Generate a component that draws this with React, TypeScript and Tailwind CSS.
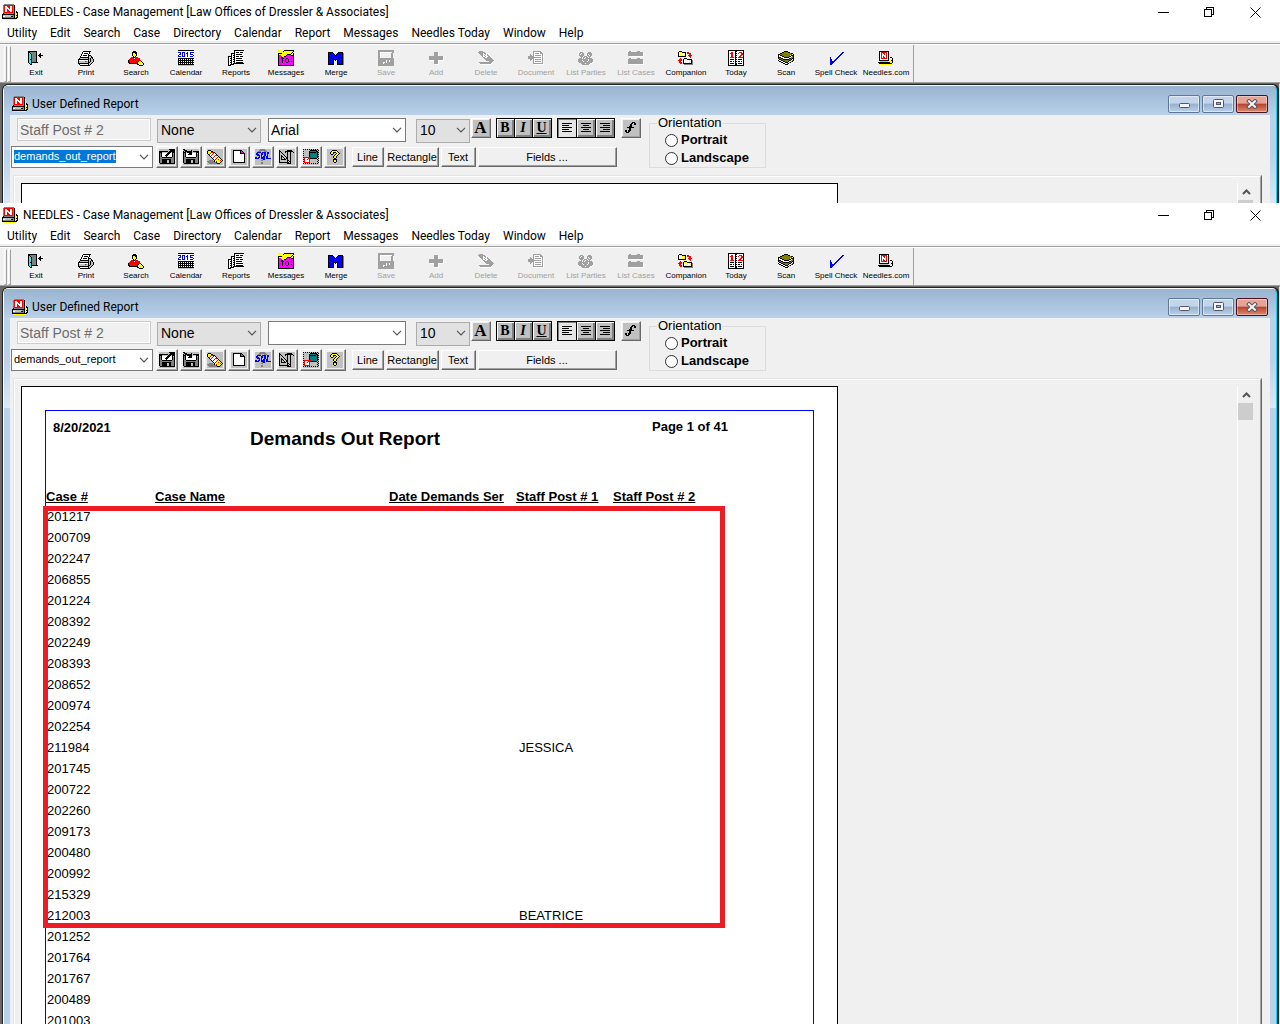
import { useEffect, useId, useRef } from 'react';
import type { ReactNode } from 'react';

const INK: Record<string, string> = {
  k: '#000000',
  w: '#ffffff',
  g: '#808080',
  a: '#a0a0a0',
  s: '#c0c0c0',
  y: '#ffff00',
  r: '#ff0000',
  b: '#0000ff',
  c: '#00ffff',
  m: '#ff00ff',
  o: '#808000',
  t: '#008080',
};

/* Sixteen-colour bitmap icon: every letter is one dot of the INK palette. */
function Bitmap({ rows }: { rows: string[] }) {
  const width = Math.max(...rows.map((r) => r.length));
  const dots: ReactNode[] = [];
  rows.forEach((row, y) => {
    let x = 0;
    while (x < row.length) {
      let end = x + 1;
      while (end < row.length && row[end] === row[x]) end++;
      if (INK[row[x]]) {
        dots.push(<rect key={y * 100 + x} x={x} y={y} width={end - x} height={1} fill={INK[row[x]]} />);
      }
      x = end;
    }
  });
  return (
    <svg width={width} height={rows.length} viewBox={`0 0 ${width} ${rows.length}`} shapeRendering="crispEdges" aria-hidden="true" className="shrink-0">
      {dots}
    </svg>
  );
}

const APP = [
  '..gggggggggg....',
  '.grrrrrrrrrgk...',
  '.grwwrrrwwrgk...',
  '.grwwwrrwwrgky..',
  '.grwwwwrwwrgky..',
  '.grwwrwwwwrgky..',
  '.grwwrrwwwrgky..',
  '.grwwrrrwwrgkyk.',
  '.grrrrrrrrrgkykk',
  '.kggggggggggkyyk',
  'kkkkkkkkkkkkkyyk',
  'ksssssssssggkykk',
  'kwwsssssskkgkyyk',
  'kgggggggggggkykk',
  'kkkkkkkkkkkkkkk.',
  '.yyyyyyyyyyyyy..',
];
const SITE = [
  '.kkkkkkkkkk.....',
  '.kwrrrrrrwk.....',
  '.kwrwrrwrwky....',
  '.kwrwwrwrwky....',
  '.kwrwwwwrwky....',
  '.kwrwrwwrwky....',
  '.kwrwrrwrwkykk..',
  '.kwrrrrrrwky..k.',
  '.kwwwwwwwwky..k.',
  '.kkkkkkkkkkyykk.',
  '..ssssssss.y..k.',
  'kkkkkkkkkkkky.k.',
  '.kkkkkkkkkkkkk..',
  '..yyyyyyyyyyyy..',
];

const EXIT = [
  'kkkkkkkkk.......',
  'kkggggggk.......',
  'kckgggggk...k...',
  'kcckggggk..kk...',
  'kcckggggk.kkkkk.',
  'kcckggggk..kk...',
  'kcckggggk...k...',
  'kcckggggk.......',
  'kckkggggk.......',
  'kcckggggk.......',
  'kcckggggk.......',
  'kcckkkkkkk......',
  '.kck............',
  '..kk............',
];
const PRINT = [
  '.....kkkkkkkk...',
  '....kwwwwwwk....',
  '....kwkkkkwk....',
  '...kwwwwwwk.....',
  '...kwkkkkwkkk...',
  '..kwwwwwwwkssk..',
  '..kkkkkkkkksskk.',
  '.kssssssssksksk.',
  'kkkkkkkkkkkskssk',
  'kwwwwwwwwwkskssk',
  'kssssssrgskskssk',
  'kssssssssskkssk.',
  'kkkkkkkkkkkssk..',
  '.kwwwwwwwwksk...',
  '..kkkkkkkkkk....',
];
const SEARCH = [
  '.....kkk........',
  '....kkkkk.......',
  '....kyykk.......',
  '....kyyyk.......',
  '....kyyyk.......',
  '.....kyk........',
  '...rrkkrrr......',
  '..rrrrwrrrrr....',
  '.rrrrrrrrrrr....',
  'krrrrrrrrrrrr...',
  'krrrrrrrrrkyyk..',
  'kkrrrrrrrkyyywk.',
  '.kkkkkkkkkwyyyyk',
  '.........kkwywwk',
  '...........kkkk.',
];
const CALENDAR = [
  'kkkkkkkkkkkkkkkk',
  'wwwwwwwwwwwwwwww',
  'bbbwbbbwwbwwbbbb',
  'wwbwbwbwbbwwbwww',
  'wbbwbwbwwbwwbbbw',
  'bwwwbwbwwbwwwwwb',
  'bbbwbbbwwbwwbbbw',
  'wwwwwwwwwwwwwwww',
  'kkkkkkkkkkkkkkkk',
  'kwkwkwkwkwkwkwkw',
  'kkkkkkkkkkkkkkkk',
  'kwkwkwkwkwkwkwkw',
  'kkkkkkkkkkkkkkkk',
  'kwkwkwkwkwkwkwkw',
  'kkkkkkkkkkkkkkkk',
  'ssssssssssssssss',
];
const REPORTS = [
  '......kkkkkkkkkk',
  '......kwwwwwwww.',
  '......kwkkkwkkk.',
  '...kkkkwwwwwww..',
  '...kwwkwkkkkkk..',
  '...kwkkwwwwwwww.',
  'kkkkwwkwkkkwkkk.',
  'kwwkwkkwwwwwwww.',
  'kwkkwwkwkkkkkk..',
  'kwwkwkkwwwwwwww.',
  'kwkkwwkwkkkkkkk.',
  'kwwkwkkwwwwwwww.',
  'kwkkwwkwkkkkkkk.',
  'kwwkwkkkkkkkkkkk',
  'kwkkkk..........',
  'kkk.............',
];
const MESSAGES = [
  'yyy...kkkkkkkkkk',
  'yyyyykyyyyyyyyyk',
  '..yyyyyyyyyyyyk.',
  'kkkkyyyyyyyyykyk',
  'kyyyyyyyykkkkyyk',
  'kmmyyyyykmmmmkkk',
  'kmmmyykkmmmmmmmk',
  'kmmkkmmmmmmmmmmk',
  'kmmkkkmmkkmmmkmk',
  'kmmmkmmkmmkmmmmk',
  'kmmmkmmkmmkmmmmk',
  'kmmmkmmkmmkmmkmk',
  'kmmmkmmmkkmmmmmk',
  'kmmmmmmmmmmmmmmk',
  'kmmmmmmmmmmmmmmk',
  'kkkkkkkkkkkkkkkk',
];
const MERGE = [
  '................',
  'kkkkk.....kkkkk.',
  'kbbbbk...kbbbbkg',
  'kbbbbbk.kbbbbbkg',
  'kbbbbbbkbbbbbbkg',
  'kbbbbbbbbbbbbbkg',
  'kbbbbbbbbbbbbbkg',
  'kbbbbkbbbkbbbbkg',
  'kbbbbkkbkkbbbbkg',
  'kbbbbk.k.kbbbbkg',
  'kbbbbk...kbbbbkg',
  'kbbbbk...kbbbbkg',
  'kbbbbk...kbbbbkg',
  'kkkkkk...kkkkkkg',
];
const SAVE = [
  'aaaaaaaaaaaaaaaa',
  'aaaaaaaaaaaaaaaa',
  'aawwwwwwwwwwwwaa',
  'aaw..........aaw',
  'aaw..........aaw',
  'aaw..........aaw',
  'aaw..........aaw',
  'aaw..........aaw',
  'aaaaaaaaaaaaaaaa',
  'aaaaaaaaaaaaaaaa',
  'aaaaaaaawaawaaaa',
  'aaaaaaaawaawaaaa',
  'aaaaawwawaaaaaaa',
  'aaaaawaaaaaaaaaa',
  'aaaaaaaaaaaaaaaa',
  'aaaaaaaaaaaaaaaa',
];
const ADD = [
  '................',
  '......aaaa......',
  '......aaaaw.....',
  '......aaaaw.....',
  '......aaaaw.....',
  '.aaaaaaaaaaaaaa.',
  '.aaaaaaaaaaaaaaw',
  '.aaaaaaaaaaaaaaw',
  '.aaaaaaaaaaaaaaw',
  '..wwwwaaaawwwwww',
  '......aaaaw.....',
  '......aaaaw.....',
  '......aaaaw.....',
  '.......wwww.....',
];
const DELETE = [
  '.aaaa...........',
  'aaaaaaa.........',
  '.aaaawaaw.......',
  '..aaawwawaw.....',
  '...aawawwaaw....',
  '....awwawwaaw...',
  '.....aawwaaaaw..',
  '......aaaaaaaa..',
  '.......aaaaaaaa.',
  '........aaaaaaaa',
  '...........aaaaw',
  '.aaaaaaaaaaaaaw.',
  '..aaaaaaaaaaaww.',
  '...wwwwwwwwww...',
];
const DOCUMENT = [
  '.....aaaaaaaa...',
  '.....awwwwwwaa..',
  '.....awaaaawaaa.',
  '..a..awwwwwwwwaw',
  '..aa.awaaaaaawaw',
  'aaaaaawwwwwwwwaw',
  'aaaaaaaaaaaaawaw',
  'aaaaaawwwwwwwwaw',
  '..aa.awaaaaaawaw',
  '..a..awwwwwwwwaw',
  '.....awaaaaaawaw',
  '.....awwwwwwwwaw',
  '.....aaaaaaaaaaw',
  '......wwwwwwwwww',
];
const PARTIES = [
  '..aaa.....aaa...',
  '.aawaa...aaaaa..',
  '.awaaa...awaaa..',
  '.aaaaa...aawaa..',
  '..aaa.aaa.aaaw..',
  '...a.aawaa.aw...',
  '.aaa.awaaaaaaa..',
  'aaaaaaaaaawaaaa.',
  'aaaawaaaaawaaaa.',
  'aaaaawaaawaaaaaw',
  '.aaaaaaaaaaaaaww',
  '...aaaawaaaaww..',
  '....aaaaaaaw....',
];
const CASES = [
  '.aa......aaa....',
  'aaaaaaaaaaaaaaa.',
  'aaaaaaaaaaaaaaaw',
  'aaaaaaaaaaaaaaaw',
  'aaaaaaaaaaaaaaaw',
  '.wwwwwwwwwwwwwww',
  '................',
  '.aa......aaa....',
  'aaaaaaaaaaaaaaa.',
  'aaaaaaaaaaaaaaaw',
  'aaaaaaaaaaaaaaaw',
  'aaaaaaaaaaaaaaaw',
  'aaaaaaaaaaaaaaaw',
  '.wwwwwwwwwwwwwww',
];
const COMPANION = [
  '.kkk............',
  'kyyykkkk.rr.....',
  'kwwwywyk.rrrr...',
  'kwywwwyk...rr...',
  'kwwwywyk..rrrr..',
  'kkkkkkkk...rr...',
  '............r...',
  '..r...kkk.......',
  '.rrr.kyyykkkkk..',
  'rrrr.kwywwwywkg.',
  '.rr..kwwwywwykg.',
  '.rrr.kwywwwywkg.',
  '..rr.kkkkkkkkkg.',
  '......ggggggggg.',
];
const TODAY = [
  'kkkkkkkkkkkkkkkk',
  'kwwwwwwkkwwwwwwk',
  'kwwrrwwkwwwrrrwk',
  'kwrrrwwkkwrwwrrk',
  'kwwrrwwkwwwwwrrk',
  'kwwrrwwkkwwwrrwk',
  'kwwrrwwkwwwrrwwk',
  'kwrrrrwkkwrrrrrk',
  'kwwwwwwkwwwwwwwk',
  'kwkkkkwkkwkkkkwk',
  'kwwwwwwkwwwwwwwk',
  'kwkkwkwkkwkkwkwk',
  'kwwwwwwkwwwwwwwk',
  'kwkkkkwkkwkkkkwk',
  'kwwwwwwkkwwwwwwk',
  'kkkkkkkkkkkkkkkk',
];
const SCAN = [
  '......kkkk......',
  '....kkooookk....',
  '..kkoooooooookk.',
  'kkooooooooooooyk',
  'kwkkooooooooykkk',
  'kwwwkkoooookkwok',
  'kkkwwwkkkkkwwook',
  'kookkwwwwwwkkokk',
  '.kkookkkkkkookwk',
  'kwwkkooooookkwok',
  '.kkwwkkoookwwok.',
  '...kkwwkkkwok...',
  '.....kkwwok.....',
  '.......kkk......',
];
const CHECK = [
  '................',
  '..............bb',
  '.............bb.',
  '............bb..',
  '...........bb...',
  '..........bb....',
  '..b......bb.....',
  '..b.....bb......',
  '..bb...bb.......',
  '..bb..bb........',
  '..bbbbb.........',
  '..bbbb..........',
  '..bbb...........',
  '..bb............',
];
const OPEN_DISK = [
  '..........kkkkkk',
  '...........kkkkk',
  'kkkkkkkkk.kkkkkk',
  'kkksssss.kkk.kkk',
  'kgkwwwwwkkkwwk.k',
  'kgkwwwwkkkwwwkgk',
  'kgkwwwkkkwwwwkgk',
  'kgkwwwwkwwwwwkgk',
  'kggkkkkkkkkkkggk',
  'kggggggggggggggk',
  'kggkkkkkkkkkgggk',
  'kggkkkkksskkgggk',
  'kggkkkkksskkgggk',
  'kggkkkkksskkgggk',
  '.kkkkkkkkkkkkkkk',
];
const SAVE_DISK = [
  'kk..............',
  '.kkk....k.......',
  'k.kkkkkkk.kkkkkk',
  'kkkskkkkk.ssskkk',
  'kgkwwwkkkwwwwk.k',
  'kgkwwkkkkwwwwkgk',
  'kgkwwwwwwwwwwkgk',
  'kgkwwwwwwwwwwkgk',
  'kggkkkkkkkkkkggk',
  'kggggggggggggggk',
  'kggkkkkkkkkkgggk',
  'kggkkkkksskkgggk',
  'kggkkkkksskkgggk',
  'kggkkkkksskkgggk',
  '.kkkkkkkkkkkkkkk',
];
const ERASER = [
  '.kkk............',
  'kyyykk..........',
  'kyyyrrkk........',
  'kyyrwwrwk.......',
  '.krwwrwwwk......',
  '..kwrwwwrrk.....',
  '...kwwwrwwwk....',
  '....kwrwwwryk...',
  '.....kwwwryyyk..',
  '......kwryyryyk.',
  '..gggg.kyyyyyryk',
  'gggggggkyryyyyk.',
  '.ggggggggkyyyk..',
  '..ggggggggkkk...',
];
const NEW_PAGE = [
  'kkkkkkkkk...',
  'kwwwwwwkmk..',
  'kwwwwwwkmmk.',
  'kwwwwwwkkkkk',
  'kwwwwwwwwwwk',
  'kwwwwwwwwwwk',
  'kwwwwwwwwwwk',
  'kwwwwwwwwwwk',
  'kwwwwwwwwwwk',
  'kwwwwwwwwwwk',
  'kwwwwwwwwwwk',
  'kwwwwwwwwwwk',
  'kkkkkkkkkkkk',
];
const SQL = [
  '.....ggggg......',
  '....ggggggg.....',
  '...ggg...ggg....',
  '..bbbb.bbbb.bb..',
  '.bb...bb.bb.bb..',
  '.bbb..bb.bb.b...',
  '..bbb.b..bb.b...',
  '....b.b.bb.bb...',
  'bb.bb.bbbb.bb...',
  'bbbb..bbbb.bbbbb',
  '.......gbb......',
  '......gg........',
  '................',
  '......gg........',
  '......gg........',
];
const DESIGN = [
  'k.......kkkkk...',
  'kk....kkkkkkkk..',
  'k.k...k.k..k..k.',
  'k..k....k..k....',
  'k...k...k..k....',
  'k.k..k..k..k....',
  'k.kk..k.k..k....',
  'k.k.k..kk..k....',
  'k.k..k.kk..k....',
  'k.kkkkk.k..k....',
  'k.......kk.k....',
  'k.......k.kk....',
  'kkkkkkkkkk.k....',
  '........kkkk....',
];
const ARRANGE = [
  'k.k.k.k.k.k.k.k.',
  '.......kkkkkkk.k',
  'k.....kttttttkk.',
  '......kkkkkkktkk',
  'k.....ktttttttk.',
  '......ktttttttkk',
  'k.....ktttttttk.',
  '......ktttttttkk',
  'krrrrrrrttttttk.',
  '.rwwwrrkkkkkkk.k',
  'krwwrwr.......k.',
  '.rwwwwr........k',
  'krwwwwr.......k.',
  '.rrrrrr........k',
  'k.k.k.k.k.k.k.k.',
];
const HELP = [
  '..kkkkk...',
  '.kyyyyyk..',
  'kyykkkyyk.',
  'kyyk..kyyk',
  '.kk..kyyk.',
  '....kyyk..',
  '...kyyk...',
  '...kyyk...',
  '....kk....',
  '...kkkk...',
  '...kyyk...',
  '...kyyk...',
  '....kk....',
];
const SCRIPT_F = [
  '.......kkk.',
  '......kk.kk',
  '.....kk..kk',
  '.....kk....',
  '....kkk....',
  '..kkkkkkk..',
  '....kk.....',
  '....kk.....',
  'kk.kkk.....',
  'kk.kk......',
  '.kkk.......',
];

const MENU = ['Utility', 'Edit', 'Search', 'Case', 'Directory', 'Calendar', 'Report', 'Messages', 'Needles Today', 'Window', 'Help'];

const TOOLS: { label: string; icon: string[]; off?: boolean }[] = [
  { label: 'Exit', icon: EXIT },
  { label: 'Print', icon: PRINT },
  { label: 'Search', icon: SEARCH },
  { label: 'Calendar', icon: CALENDAR },
  { label: 'Reports', icon: REPORTS },
  { label: 'Messages', icon: MESSAGES },
  { label: 'Merge', icon: MERGE },
  { label: 'Save', icon: SAVE, off: true },
  { label: 'Add', icon: ADD, off: true },
  { label: 'Delete', icon: DELETE, off: true },
  { label: 'Document', icon: DOCUMENT, off: true },
  { label: 'List Parties', icon: PARTIES, off: true },
  { label: 'List Cases', icon: CASES, off: true },
  { label: 'Companion', icon: COMPANION },
  { label: 'Today', icon: TODAY },
  { label: 'Scan', icon: SCAN },
  { label: 'Spell Check', icon: CHECK },
  { label: 'Needles.com', icon: SITE },
];

const FILE_TOOLS: { label: string; icon: string[] }[] = [
  { label: 'Open report', icon: OPEN_DISK },
  { label: 'Save report', icon: SAVE_DISK },
  { label: 'Erase', icon: ERASER },
  { label: 'New report', icon: NEW_PAGE },
  { label: 'SQL', icon: SQL },
  { label: 'Design', icon: DESIGN },
  { label: 'Arrange', icon: ARRANGE },
  { label: 'Help', icon: HELP },
];

const COLUMNS = ['Case #', 'Case Name', 'Date Demands Ser', 'Staff Post # 1', 'Staff Post # 2'];

const ROWS: { id: string; staff?: string }[] = [
  { id: '201217' }, { id: '200709' }, { id: '202247' }, { id: '206855' }, { id: '201224' },
  { id: '208392' }, { id: '202249' }, { id: '208393' }, { id: '208652' }, { id: '200974' },
  { id: '202254' }, { id: '211984', staff: 'JESSICA' }, { id: '201745' }, { id: '200722' }, { id: '202260' },
  { id: '209173' }, { id: '200480' }, { id: '200992' }, { id: '215329' }, { id: '212003', staff: 'BEATRICE' },
  { id: '201252' }, { id: '201764' }, { id: '201767' }, { id: '200489' }, { id: '201003' },
];

function Chevron() {
  return (
    <svg width="10" height="6" viewBox="0 0 10 6" fill="none" stroke="#555" strokeWidth="1.2" aria-hidden="true">
      <path d="M1 .8 5 4.8 9 .8" />
    </svg>
  );
}

function TitleBar() {
  return (
    <header className="flex h-6 shrink-0 items-center bg-white pl-0.5">
      <Bitmap rows={APP} />
      <h1 className="ml-[5px] grow text-[12px] leading-4">NEEDLES - Case Management [Law Offices of Dressler &amp; Associates]</h1>
      <div className="mr-0.5 flex h-5">
        <button aria-label="Minimize" className="flex w-[46px] items-center justify-center">
          <svg width="11" height="11" shapeRendering="crispEdges"><path d="M0 5.5h11" stroke="#000" /></svg>
        </button>
        <button aria-label="Restore" className="flex w-[46px] items-center justify-center">
          <svg width="11" height="11" fill="none" stroke="#000" shapeRendering="crispEdges"><path d="M.5 2.5h7v7h-7zM2.5 2V.5h7v7H8" /></svg>
        </button>
        <button aria-label="Close" className="flex w-[46px] items-center justify-center">
          <svg width="11" height="11" stroke="#000"><path d="M.5.5l10 10M10.500.5l-10 10" /></svg>
        </button>
      </div>
    </header>
  );
}

function ToolBar() {
  return (
    <div role="toolbar" className="flex h-[42px] shrink-0 border-t-2 border-b border-t-[#efefef] border-b-[#a0a0a0] bg-[#f0f0f0]">
      <div className="flex grow border-t border-[#a0a0a0]">
        <div className="flex grow border-t border-white pl-1">
          <span className="mt-px mr-px w-[3px] border border-t-white border-r-[#a0a0a0] border-b-[#a0a0a0] border-l-white" />
          <span className="mt-px mr-px w-[3px] border border-t-white border-r-[#a0a0a0] border-b-[#a0a0a0] border-l-white" />
          <div className="-ml-px flex border-r border-[#a0a0a0] pr-0.5">
            {TOOLS.map((t) => (
              <button key={t.label} disabled={t.off} className="flex w-[50px] flex-col items-center pt-[5px] text-black disabled:text-[#a0a0a0]">
                <span className="flex h-4 w-4 items-center justify-center"><Bitmap rows={t.icon} /></span>
                <span className="mt-0.5 font-[Liberation_Sans,Arial,sans-serif] text-[8px] leading-[10px] whitespace-nowrap">{t.label}</span>
              </button>
            ))}
          </div>
        </div>
      </div>
    </div>
  );
}

function FrameButtons() {
  const glass = 'flex h-[18px] w-8 items-center justify-center rounded-xs border border-[#5f7896] bg-linear-to-b from-[#c3d5e9] from-45% via-[#96b0cf] via-50% to-[#b9d1ea] shadow-[inset_0_0_0_1px_#ffffff80]';
  return (
    <div className="flex gap-0.5">
      <button aria-label="Minimize report" className={glass}>
        <svg width="11" height="5" className="mt-1"><rect x=".5" y=".5" width="10" height="4" rx="1" fill="#f4f4f4" stroke="#535666" /></svg>
      </button>
      <button aria-label="Maximize report" className={glass}>
        <svg width="11" height="9"><rect x=".5" y=".5" width="10" height="8" rx="1" fill="#f4f4f4" stroke="#535666" /><rect x="3.500" y="3.500" width="4" height="2" fill="#96b0cf" stroke="#535666" /></svg>
      </button>
      <button aria-label="Close report" className="flex h-[18px] w-8 items-center justify-center rounded-xs border border-[#4c1018] bg-linear-to-b from-[#e5a498] from-45% via-[#bb3f27] via-50% to-[#d98b72] shadow-[inset_0_0_0_1px_#ffffff60]">
        <svg width="12" height="10" viewBox="0 0 12 10" strokeLinecap="square"><path d="M3 2.200 9 7.800M9 2.200 3 7.800" stroke="#535666" strokeWidth="4" /><path d="M3 2.200 9 7.800M9 2.200 3 7.800" stroke="#f6f6f6" strokeWidth="2" /></svg>
      </button>
    </div>
  );
}

function ComboBox({ label, value, active, className, textClass }: { label: string; value: string; active?: boolean; className: string; textClass: string }) {
  const ref = useRef<HTMLInputElement>(null);
  useEffect(() => {
    if (active) {
      ref.current?.focus();
      ref.current?.select();
    }
  }, [active]);
  return (
    <div className={`flex items-center border border-[#7a7a7a] bg-white pr-[3px] ${className}`}>
      <input aria-label={label} ref={ref} defaultValue={value} className={`min-w-0 grow bg-transparent outline-none selection:bg-[#0078d7] selection:text-white ${textClass}`} />
      <button aria-label={`${label} list`}><Chevron /></button>
    </div>
  );
}

function Select({ label, value, className }: { label: string; value: string; className: string }) {
  return (
    <div className={`relative h-6 ${className}`}>
      <select aria-label={label} defaultValue={value} className="h-full w-full appearance-none border border-[#acacac] bg-[#e1e1e1] pl-[3px] text-[14px] outline-none">
        <option>{value}</option>
      </select>
      <span className="pointer-events-none absolute top-[9px] right-1"><Chevron /></span>
    </div>
  );
}

const RAISED = 'border border-t-white border-l-white border-r-[#696969] border-b-[#696969] shadow-[inset_-1px_-1px_0_#a0a0a0]';

function IconButton({ label, children, className = '' }: { label: string; children: ReactNode; className?: string }) {
  return (
    <button aria-label={label} className={`flex shrink-0 items-center justify-center bg-[#f0f0f0] pr-px pb-px ${RAISED} ${className}`}>
      <span className="flex h-4 w-4 items-center justify-center bg-[#c0c0c0]">{children}</span>
    </button>
  );
}

const DARK_KEY = 'flex h-5 items-center justify-center border border-black bg-[#c0c0c0] pr-px pb-px font-[Liberation_Serif,serif] text-[14px] leading-4 font-bold shadow-[inset_1px_1px_0_#fff,inset_-2px_-2px_0_#808080]';

function AlignKey({ label, pressed, path }: { label: string; pressed?: boolean; path: string }) {
  return (
    <button aria-label={label} aria-pressed={!!pressed} className={`${DARK_KEY} -mr-px w-5 aria-pressed:bg-[#e4e4e4] aria-pressed:shadow-[inset_1px_1px_0_#808080]`}>
      <svg width="10" height="10" stroke="#000" shapeRendering="crispEdges"><path d={path} /></svg>
    </button>
  );
}

function TextButton({ children, className }: { children: ReactNode; className: string }) {
  return <button className={`h-5 shrink-0 bg-[#f0f0f0] pr-px pb-px text-[11px] leading-4 whitespace-nowrap ${RAISED} ${className}`}>{children}</button>;
}

function Controls({ font, active }: { font: string; active?: boolean }) {
  const group = useId();
  return (
    <div className="flex h-[53px] shrink-0">
      <div className="flex flex-col gap-1 pt-[3px]">
        <div className="flex h-6">
          <input aria-label="Field" disabled defaultValue="Staff Post # 2" className="ml-[7px] h-[23px] w-[134px] border border-[#ccc] bg-[#f0f0f0] pl-0.5 text-[14px] text-[#6d6d6d] shadow-[inset_0_0_0_1px_#fff]" />
          <Select label="Border" value="None" className="ml-1.5 w-[104px]" />
          <ComboBox label="Font" value={font} className="ml-[7px] h-6 w-[138px] pl-0.5" textClass="text-[14px] leading-4" />
          <Select label="Size" value="10" className="ml-2.5 w-[54px]" />
          <IconButton label="Font colour" className="ml-px h-5 w-5"><span className="font-[Liberation_Serif,serif] text-[17px] leading-4 font-bold">A</span></IconButton>
          <div className="ml-[5px] flex">
            <button aria-label="Bold" className={`${DARK_KEY} -mr-px w-[19px]`}>B</button>
            <button aria-label="Italic" className={`${DARK_KEY} -mr-px w-[19px] italic`}>I</button>
            <button aria-label="Underline" className={`${DARK_KEY} w-5 underline`}>U</button>
          </div>
          <div className="ml-[5px] flex">
            <AlignKey label="Align left" pressed path="M0 .5h10M0 2.500h7M0 4.500h10M0 6.500h7M0 8.500h10" />
            <AlignKey label="Align centre" path="M0 .5h10M2 2.500h6M0 4.500h10M2 6.500h6M0 8.500h10" />
            <AlignKey label="Align right" path="M0 .5h10M3 2.500h7M0 4.500h10M3 6.500h7M0 8.500h10" />
          </div>
          <IconButton label="Function" className="ml-[7px] h-5 w-5"><Bitmap rows={SCRIPT_F} /></IconButton>
        </div>
        <div className="flex h-[22px] items-center pl-px">
          <ComboBox label="Report" value="demands_out_report" active={active} className="h-[22px] w-[142px] pl-0.5" textClass="mb-0.5 h-[13px] text-[11px] leading-[13px]" />
          <div className="ml-[3px] flex gap-0.5">
            {FILE_TOOLS.map((t) => (
              <IconButton key={t.label} label={t.label} className="h-[22px] w-[22px]"><Bitmap rows={t.icon} /></IconButton>
            ))}
          </div>
          <TextButton className="ml-1.5 w-8">Line</TextButton>
          <TextButton className="ml-0.5 w-[53px]">Rectangle</TextButton>
          <TextButton className="ml-0.5 w-[35px]">Text</TextButton>
          <TextButton className="ml-0.5 w-[139px] pr-1">Fields ...</TextButton>
        </div>
      </div>
      <fieldset className="ml-2 w-[117px] border border-[#dcdcdc] pl-[15px] text-[13px]">
        <legend className="-ml-2 px-px leading-4">Orientation</legend>
        {['Portrait', 'Landscape'].map((o) => (
          <label key={o} className="flex h-[18px] items-center gap-[3px] font-bold">
            <input type="radio" name={group} className="m-0 h-[13px] w-[13px] shrink-0 appearance-none rounded-full border border-[#333] bg-white" />
            {o}
          </label>
        ))}
      </fieldset>
    </div>
  );
}

function ReportPage() {
  return (
    <article className="w-[817px] shrink-0 self-start border border-black bg-white px-[23px] pt-[23px]">
      <div className="border border-b-0 border-[#0000ff]">
        <div className="grid h-[76px] grid-cols-[204px_402px_1fr] text-[13px] font-bold">
          <time className="pt-[9px] pl-[7px] leading-4">8/20/2021</time>
          <h2 className="pt-4 text-[19px] leading-6">Demands Out Report</h2>
          <p className="pt-2 leading-4">Page 1 of 41</p>
        </div>
        <div className="relative">
          <table className="w-full table-fixed border-collapse text-left text-[13px] leading-4">
            <colgroup>
              <col className="w-[109px]" />
              <col className="w-[234px]" />
              <col className="w-[127px]" />
              <col className="w-[97px]" />
              <col />
            </colgroup>
            <thead>
              <tr className="h-[19px]">
                {COLUMNS.map((c) => (
                  <th key={c} className="p-0 font-bold whitespace-nowrap underline">{c}</th>
                ))}
              </tr>
            </thead>
            <tbody>
              {ROWS.map((r) => (
                <tr key={r.id} className="h-[21px]">
                  <td className="p-0 pl-px">{r.id}</td>
                  <td className="p-0" />
                  <td className="p-0" />
                  <td className="p-0 pl-[3px]">{r.staff}</td>
                  <td className="p-0" />
                </tr>
              ))}
            </tbody>
          </table>
          <div className="pointer-events-none absolute top-[19px] -left-[3px] h-[422px] w-[682px] border-5 border-[#ed1c24]" />
        </div>
      </div>
    </article>
  );
}

function ReportWindow({ font, active, blank }: { font: string; active?: boolean; blank?: boolean }) {
  const edge = 'w-1.5 shrink-0 overflow-hidden bg-[#b9d1ea]';
  const glow = 'h-[90px] bg-linear-to-b from-[#b9d1ea] from-45% to-[#dbe8f6]';
  return (
    <section className="flex min-h-0 grow flex-col overflow-hidden border-t border-r border-l-2 border-[#696969] border-r-[#e3e3e3] bg-[#696969]">
      <div className="flex min-h-0 grow flex-col overflow-hidden rounded-t-md border-t border-r-2 border-l border-t-[#222] border-r-[#222] border-l-[#222]">
        <div className="flex min-h-0 grow flex-col overflow-hidden rounded-t-[5px] border-t border-r border-l border-t-white border-r-[#00d8f8] border-l-white">
          <div className="flex h-[29px] shrink-0 items-center bg-linear-to-b from-[#99b4d1] to-[#b9d1ea] pt-1.5 pr-2 pl-2">
            <Bitmap rows={APP} />
            <h2 className="ml-1 grow text-[12px] leading-4">User Defined Report</h2>
            <FrameButtons />
          </div>
          <div className="flex min-h-0 grow">
            <div className={edge}><div className={glow} /></div>
            <div className="flex min-w-0 grow flex-col bg-[#f0f0f0] font-[Liberation_Sans,Arial,sans-serif]">
              <Controls font={font} active={active} />
              <div className="mt-[7px] mr-2 ml-[3px] flex min-h-0 grow border-t border-r border-l border-t-[#e3e3e3] border-r-[#696969] border-l-[#e3e3e3]">
                <div className="flex min-h-0 grow overflow-hidden border-t border-r border-l border-t-white border-r-[#a0a0a0] border-l-white pt-1.5 pl-1.5">
                  {blank ? <article className="w-[817px] shrink-0 border border-b-0 border-black bg-white" /> : <ReportPage />}
                  <div className="mr-1.5 ml-auto flex w-[17px] flex-col items-center border-l border-white">
                    <button aria-label="Scroll up" className="flex h-[17px] shrink-0 items-center">
                      <svg width="9" height="6" fill="none" stroke="#555" strokeWidth="2"><path d="M1 5 4.500 1.500 8 5" /></svg>
                    </button>
                    <div className="h-[17px] w-[15px] shrink-0 self-start bg-[#cdcdcd]" />
                  </div>
                </div>
              </div>
            </div>
            <div className={edge}><div className={glow} /></div>
          </div>
        </div>
      </div>
    </section>
  );
}

function NeedlesWindow({ font, active, blank, className }: { font: string; active?: boolean; blank?: boolean; className: string }) {
  return (
    <main className={`flex flex-col overflow-hidden bg-white ${className}`}>
      <TitleBar />
      <nav className="flex h-[17px] shrink-0 items-center gap-[13px] pt-px pl-[7px] text-[12px] leading-4">
        {MENU.map((m) => (
          <button key={m} className="whitespace-nowrap">{m}</button>
        ))}
      </nav>
      <ToolBar />
      <ReportWindow font={font} active={active} blank={blank} />
    </main>
  );
}

export default function App() {
  return (
    <div className="flex h-screen flex-col overflow-hidden bg-white font-[Roboto,sans-serif] text-black">
      <NeedlesWindow font="Arial" active blank className="h-[203px] shrink-0" />
      <NeedlesWindow font="" className="min-h-0 grow" />
    </div>
  );
}
